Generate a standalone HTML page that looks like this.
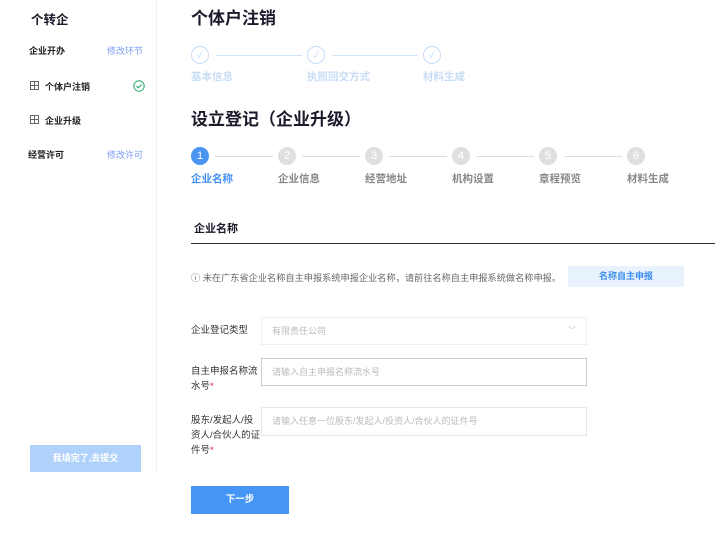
<!DOCTYPE html>
<html><head><meta charset="utf-8"><style>
*{margin:0;padding:0;box-sizing:border-box}
body{width:720px;height:536px;background:#fff;position:relative;overflow:hidden;font-family:"Liberation Sans","Noto Sans CJK SC",sans-serif;color:#222}
.a{position:absolute;white-space:nowrap}
.sb{position:absolute;left:156px;top:0;width:1px;height:472px;background:#f0f0f0}
.c{position:absolute;width:18px;height:18px;border-radius:50%;font-size:11px;text-align:center;line-height:18px;color:#fff}
.ln{position:absolute;height:1px}
.inp{position:absolute;left:261px;width:326px;border:1px solid #e6e6e6;font-size:9px;color:#bbb;padding-left:10px}
.lb{position:absolute;left:191px;font-size:9.5px;line-height:15px;color:#333}
.st{color:#d8273a}
</style></head><body>
<div class="sb"></div>
<div class="a" style="left:31px;top:9px;font-size:12.5px;font-weight:bold;color:#1a1a2a">个转企</div>
<div class="a" style="left:29px;top:44px;font-size:9px;font-weight:bold">企业开办</div>
<div class="a" style="left:107px;top:44px;font-size:9px;color:#7a9cf0">修改环节</div>
<svg class="a" style="left:30px;top:81px" width="9" height="9" viewBox="0 0 9 9"><rect x="0.5" y="0.5" width="8" height="8" fill="none" stroke="#666"/><path d="M4.5 0.5V8.5M0.5 4.5H8.5" stroke="#666"/></svg>
<div class="a" style="left:45px;top:80px;font-size:9px;font-weight:bold">个体户注销</div>
<svg class="a" style="left:133px;top:80px" width="12" height="12" viewBox="0 0 12 12"><circle cx="6" cy="6" r="5.2" fill="none" stroke="#2aa86a" stroke-width="1"/><path d="M3.5 6.2L5.3 7.8 8.5 4.5" fill="none" stroke="#2aa86a" stroke-width="1.1"/></svg>
<svg class="a" style="left:30px;top:115px" width="9" height="9" viewBox="0 0 9 9"><rect x="0.5" y="0.5" width="8" height="8" fill="none" stroke="#666"/><path d="M4.5 0.5V8.5M0.5 4.5H8.5" stroke="#666"/></svg>
<div class="a" style="left:45px;top:114px;font-size:9px;font-weight:bold">企业升级</div>
<div class="a" style="left:28px;top:148px;font-size:9px;font-weight:bold">经营许可</div>
<div class="a" style="left:107px;top:148px;font-size:9px;color:#7a9cf0">修改许可</div>
<div class="a" style="left:30px;top:445px;width:111px;height:27px;background:#b0d2fa;color:#fff;font-size:9px;font-weight:bold;text-align:center;line-height:27px">我填完了,去提交</div>

<div class="a" style="left:191px;top:4px;font-size:17px;font-weight:bold;color:#1a1a2a">个体户注销</div>
<div class="c" style="left:191px;top:46px;border:1px solid #c6ddf7;color:#c6ddf7;font-size:9px;line-height:16px">✓</div>
<div class="ln" style="left:216px;top:55px;width:86px;background:#d4e4f7"></div>
<div class="c" style="left:307px;top:46px;border:1px solid #c6ddf7;color:#c6ddf7;font-size:9px;line-height:16px">✓</div>
<div class="ln" style="left:332px;top:55px;width:86px;background:#d4e4f7"></div>
<div class="c" style="left:423px;top:46px;border:1px solid #c6ddf7;color:#c6ddf7;font-size:9px;line-height:16px">✓</div>
<div class="a" style="left:191px;top:69px;font-size:10.5px;font-weight:bold;color:#c8ddf5">基本信息</div>
<div class="a" style="left:307px;top:69px;font-size:10.5px;font-weight:bold;color:#c8ddf5">执照回交方式</div>
<div class="a" style="left:423px;top:69px;font-size:10.5px;font-weight:bold;color:#c8ddf5">材料生成</div>

<div class="a" style="left:191px;top:105px;font-size:17px;font-weight:bold;color:#1a1a2a">设立登记（企业升级）</div>
<div class="c" style="left:191px;top:147px;background:#4a94f2">1</div>
<div class="ln" style="left:215px;top:156px;width:58px;background:#ddd"></div>
<div class="c" style="left:278px;top:147px;background:#e0e0e0">2</div>
<div class="ln" style="left:302px;top:156px;width:58px;background:#ddd"></div>
<div class="c" style="left:365px;top:147px;background:#e0e0e0">3</div>
<div class="ln" style="left:389px;top:156px;width:58px;background:#ddd"></div>
<div class="c" style="left:452px;top:147px;background:#e0e0e0">4</div>
<div class="ln" style="left:476px;top:156px;width:58px;background:#ddd"></div>
<div class="c" style="left:539px;top:147px;background:#e0e0e0">5</div>
<div class="ln" style="left:564px;top:156px;width:58px;background:#ddd"></div>
<div class="c" style="left:627px;top:147px;background:#e0e0e0">6</div>
<div class="a" style="left:191px;top:171px;font-size:10.5px;font-weight:bold;color:#3d8ef0">企业名称</div>
<div class="a" style="left:278px;top:171px;font-size:10.5px;font-weight:bold;color:#888">企业信息</div>
<div class="a" style="left:365px;top:171px;font-size:10.5px;font-weight:bold;color:#888">经营地址</div>
<div class="a" style="left:452px;top:171px;font-size:10.5px;font-weight:bold;color:#888">机构设置</div>
<div class="a" style="left:539px;top:171px;font-size:10.5px;font-weight:bold;color:#888">章程预览</div>
<div class="a" style="left:627px;top:171px;font-size:10.5px;font-weight:bold;color:#888">材料生成</div>

<div class="a" style="left:194px;top:220px;font-size:11px;font-weight:bold;color:#1a1a2a">企业名称</div>
<div class="ln" style="left:191px;top:243px;width:524px;background:#333"></div>
<div class="a" style="left:191px;top:270px;font-size:9.2px;color:#666">ⓘ 未在广东省企业名称自主申报系统申报企业名称，请前往名称自主申报系统做名称申报。</div>
<div class="a" style="left:568px;top:266px;width:116px;height:21px;background:#e8f2fd;color:#3d8ef0;font-size:9px;font-weight:bold;text-align:center;line-height:21px">名称自主申报</div>

<div class="lb" style="top:323px">企业登记类型</div>
<div class="inp" style="top:317px;height:28px;line-height:26px;border-color:#eee">有限责任公司<span style="position:absolute;right:10px;color:#bbb;font-size:8px">﹀</span></div>
<div class="lb" style="top:364px">自主申报名称流<br>水号<span class="st">*</span></div>
<div class="inp" style="top:358px;height:28px;line-height:26px;border-color:#ccc">请输入自主申报名称流水号</div>
<div class="lb" style="top:413px">股东/发起人/投<br>资人/合伙人的证<br>件号<span class="st">*</span></div>
<div class="inp" style="top:407px;height:29px;line-height:27px">请输入任意一位股东/发起人/投资人/合伙人的证件号</div>

<div class="a" style="left:191px;top:486px;width:98px;height:28px;background:#4595f4;color:#fff;font-size:9.5px;font-weight:bold;text-align:center;line-height:28px">下一步</div>
</body></html>
